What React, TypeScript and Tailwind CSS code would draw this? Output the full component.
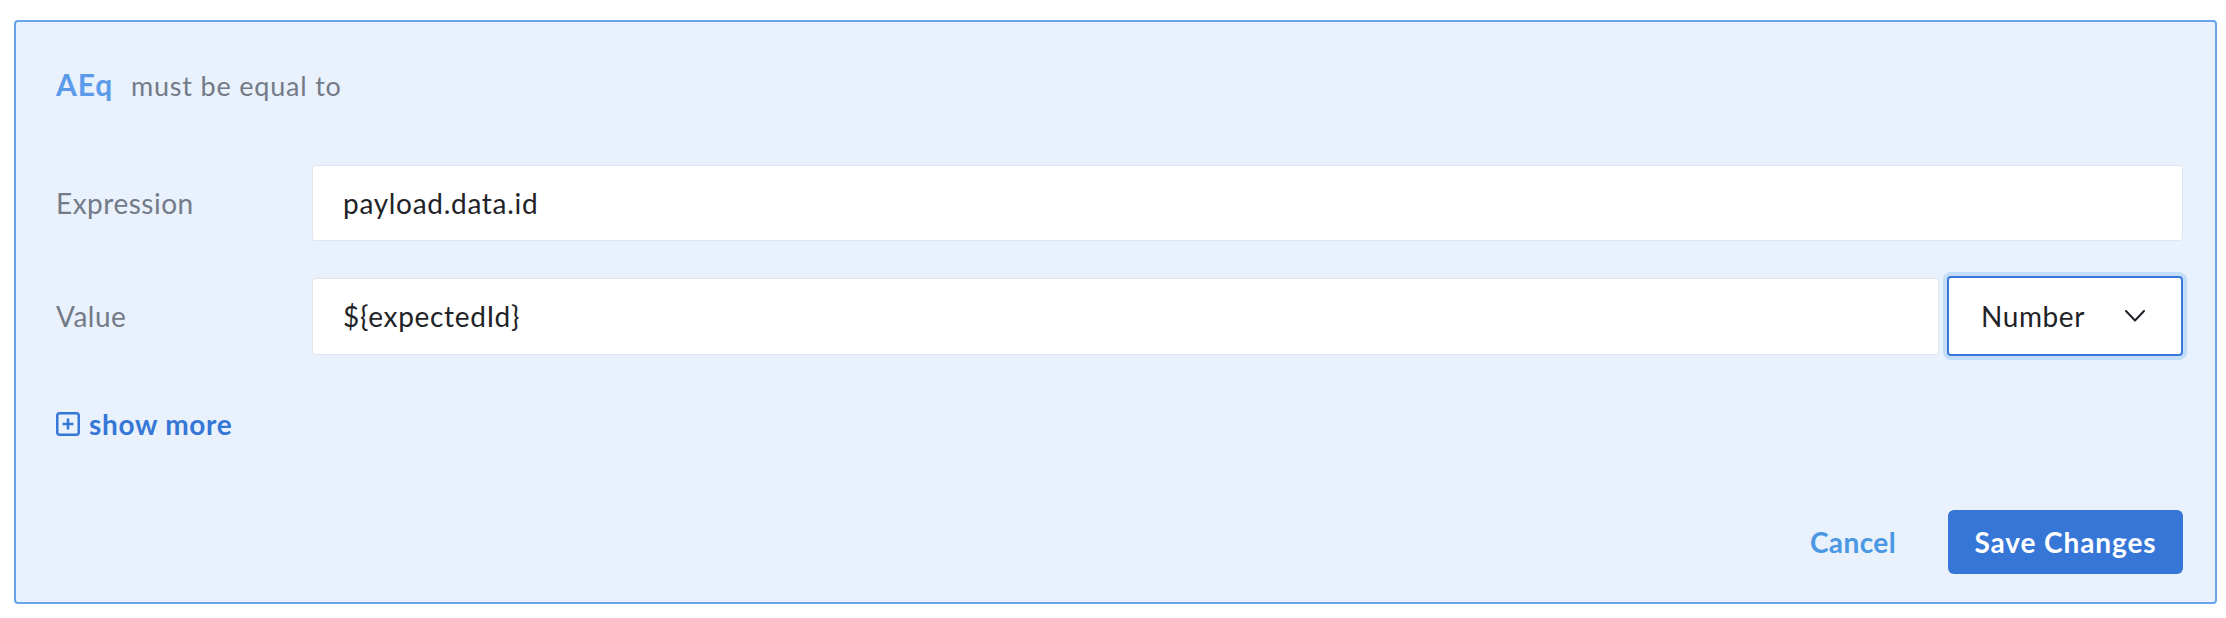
import React from "react";

function PlusSquare() {
  return (
    <svg width="24" height="24" viewBox="0 0 24 24" fill="none" className="shrink-0">
      <rect x="1.25" y="1.25" width="21.5" height="21.5" rx="2.5" stroke="#3577d6" strokeWidth="2.5" />
      <path d="M12 6.5v11M6.5 12h11" stroke="#3577d6" strokeWidth="2.6" strokeLinecap="butt" />
    </svg>
  );
}

function Chevron() {
  return (
    <svg width="20" height="12" viewBox="0 0 20 12" fill="none" className="shrink-0">
      <path d="M1 1l9 9.5L19 1" stroke="#1f2328" strokeWidth="2" strokeLinecap="round" strokeLinejoin="round" />
    </svg>
  );
}

export default function App() {
  return (
    <div
      className="w-[2226px] h-[618px] bg-white pt-[20px] pl-[14px]"
      style={{ fontFamily: "Lato, 'Open Sans', sans-serif" }}
    >
      <div className="w-[2203px] h-[584px] rounded-[4px] border-2 border-[#68a3ec] bg-[#e9f1fc] pl-[40px] pr-[32px] pt-[44px] flex flex-col">
        <div className="flex items-baseline h-[36px] leading-[36px]">
          <span className="text-[30px] font-bold tracking-[0.8px] text-[#5c9be9]">AEq</span>
          <span className="ml-[18px] text-[27px] tracking-[0.8px] text-[#737b88]">must be equal to</span>
        </div>

        <div className="mt-[63px] flex items-center h-[76px]">
          <div className="w-[256px] shrink-0 text-[28px] tracking-[0.5px] text-[#737b88]">Expression</div>
          <div className="flex-1 h-[76px] bg-white border border-[#e1e6ee] rounded-[3px] flex items-center pl-[30px] text-[28px] tracking-[0.7px] text-[#1f2328]">
            payload.data.id
          </div>
        </div>

        <div className="mt-[35px] flex items-center h-[80px]">
          <div className="w-[256px] shrink-0 text-[28px] tracking-[0.5px] text-[#737b88]">Value</div>
          <div className="flex-1 h-[77px] bg-white border border-[#e1e6ee] rounded-[3px] flex items-center pl-[30px] text-[28px] tracking-[0.7px] text-[#1f2328]">
            {"${expectedId}"}
          </div>
          <div className="ml-[8px] w-[236px] h-[80px] shrink-0 bg-white border-2 border-[#3a79d9] rounded-[4px] shadow-[0_0_0_4px_#c4ddf8] flex items-center justify-between pl-[32px] pr-[36px] text-[28px] tracking-[0.6px] text-[#1f2328]">
            <span>Number</span>
            <Chevron />
          </div>
        </div>

        <div className="mt-[56px] flex items-center h-[24px] gap-[9px]">
          <PlusSquare />
          <span className="text-[28px] font-bold tracking-[0.7px] text-[#3577d6] leading-none">show more</span>
        </div>

        <div className="mt-[74px] flex items-center justify-end gap-[52px]">
          <span className="text-[28px] font-bold tracking-[0.4px] text-[#4a97e4]">Cancel</span>
          <div className="w-[235px] h-[64px] rounded-[6px] bg-[#3576d7] flex items-center justify-center text-[28px] font-bold tracking-[0.9px] text-white">
            Save Changes
          </div>
        </div>
      </div>
    </div>
  );
}
